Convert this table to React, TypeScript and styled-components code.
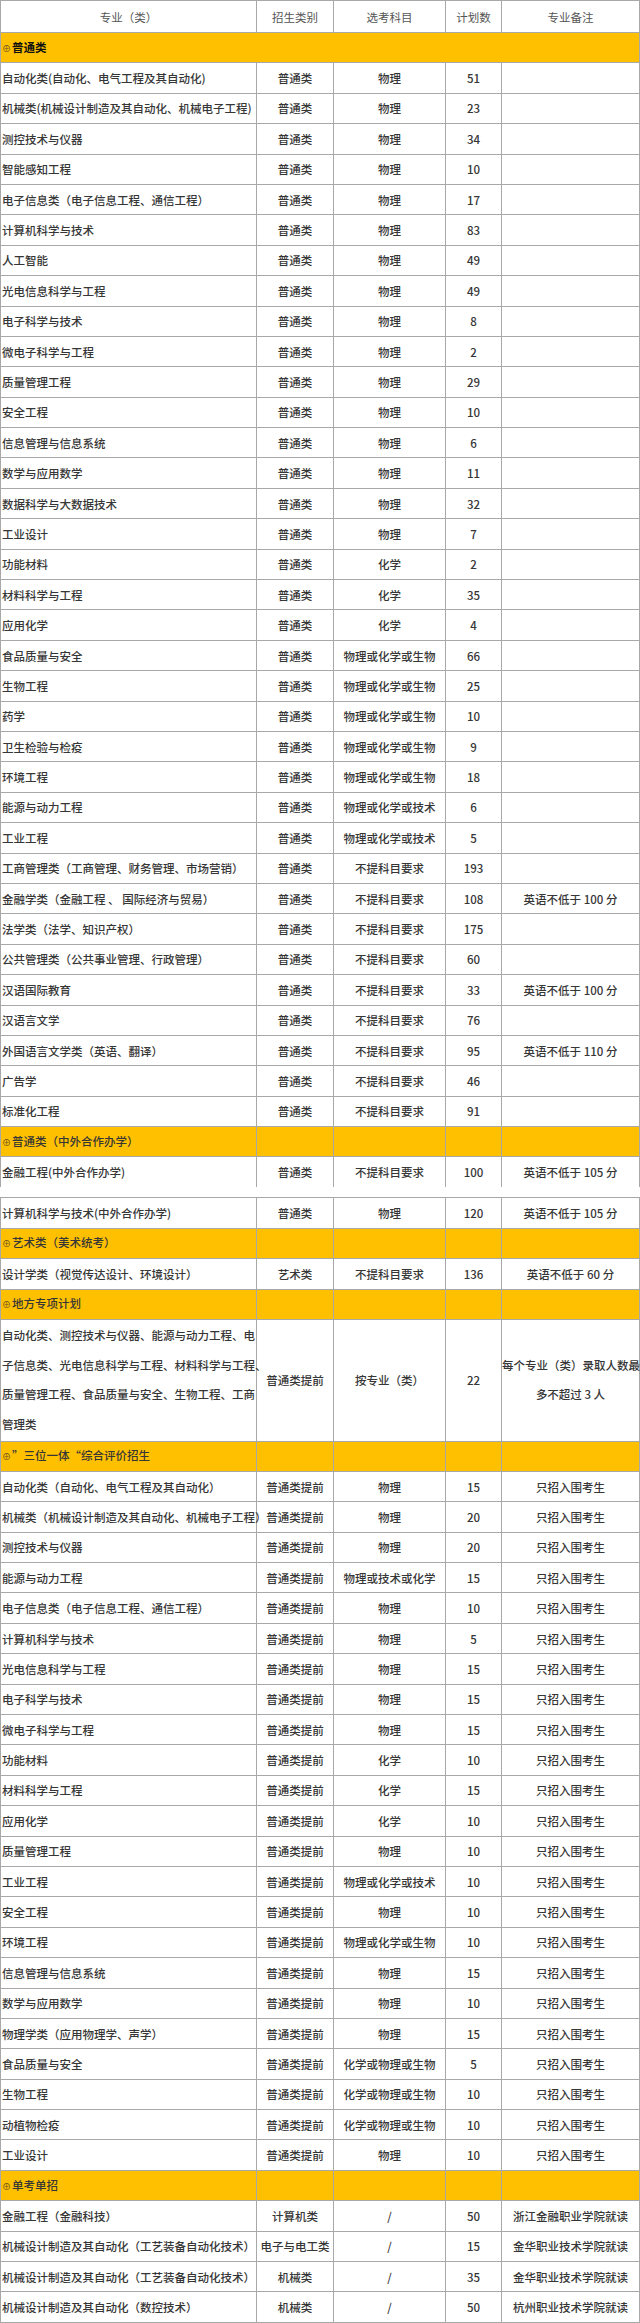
import React from 'react'
import styled, { createGlobalStyle } from 'styled-components'

const GlobalStyle = createGlobalStyle`
  html, body {
    margin: 0;
    padding: 0;
    background: #fff;
  }
  body {
    font-family: "Noto Sans CJK SC", "Noto Sans", sans-serif;
  }
`

const Page = styled.div`
  width: 640px;
  color: #363636;
  font-size: 11.5px;
  font-weight: 500;
`

const Table = styled.table<{ $openEnd?: boolean }>`
  width: 639px;
  border-collapse: collapse;
  table-layout: fixed;
  ${(p) => p.$openEnd && 'tr:last-child td { border-bottom: none; }'}
`

const Gap = styled.div`
  height: 10px;
`

const Row = styled.tr<{ $h?: number }>`
  height: ${(p) => p.$h ?? 30.4}px;
`

const Cell = styled.td<{ $left?: boolean; $tall?: boolean }>`
  border: 1px solid #a8a8a8;
  padding: 0 0 0 ${(p) => (p.$left ? 1 : 0)}px;
  text-align: ${(p) => (p.$left ? 'left' : 'center')};
  vertical-align: middle;
  white-space: nowrap;
  line-height: ${(p) => (p.$tall ? '29.5px' : '16px')};
`

const HeadCell = styled(Cell)`
  color: #555;
  font-weight: 400;
`

const SectionCell = styled(Cell)`
  background: #ffc000;
`

const Mark = styled.span`
  font-size: 9px;
  font-weight: 400;
  color: #6a5520;
  margin-right: 1px;
`

const SectionName = styled.span<{ $strong?: boolean }>`
  font-weight: ${(p) => (p.$strong ? 700 : 500)};
  color: ${(p) => (p.$strong ? '#111' : '#363636')};
`

type Item = [string, string, string, string, string?]

const general: Item[] = [
  ['自动化类(自动化、电气工程及其自动化)', '普通类', '物理', '51'],
  ['机械类(机械设计制造及其自动化、机械电子工程)', '普通类', '物理', '23'],
  ['测控技术与仪器', '普通类', '物理', '34'],
  ['智能感知工程', '普通类', '物理', '10'],
  ['电子信息类（电子信息工程、通信工程）', '普通类', '物理', '17'],
  ['计算机科学与技术', '普通类', '物理', '83'],
  ['人工智能', '普通类', '物理', '49'],
  ['光电信息科学与工程', '普通类', '物理', '49'],
  ['电子科学与技术', '普通类', '物理', '8'],
  ['微电子科学与工程', '普通类', '物理', '2'],
  ['质量管理工程', '普通类', '物理', '29'],
  ['安全工程', '普通类', '物理', '10'],
  ['信息管理与信息系统', '普通类', '物理', '6'],
  ['数学与应用数学', '普通类', '物理', '11'],
  ['数据科学与大数据技术', '普通类', '物理', '32'],
  ['工业设计', '普通类', '物理', '7'],
  ['功能材料', '普通类', '化学', '2'],
  ['材料科学与工程', '普通类', '化学', '35'],
  ['应用化学', '普通类', '化学', '4'],
  ['食品质量与安全', '普通类', '物理或化学或生物', '66'],
  ['生物工程', '普通类', '物理或化学或生物', '25'],
  ['药学', '普通类', '物理或化学或生物', '10'],
  ['卫生检验与检疫', '普通类', '物理或化学或生物', '9'],
  ['环境工程', '普通类', '物理或化学或生物', '18'],
  ['能源与动力工程', '普通类', '物理或化学或技术', '6'],
  ['工业工程', '普通类', '物理或化学或技术', '5'],
  ['工商管理类（工商管理、财务管理、市场营销）', '普通类', '不提科目要求', '193'],
  ['金融学类（金融工程 、 国际经济与贸易）', '普通类', '不提科目要求', '108', '英语不低于 100 分'],
  ['法学类（法学、知识产权）', '普通类', '不提科目要求', '175'],
  ['公共管理类（公共事业管理、行政管理）', '普通类', '不提科目要求', '60'],
  ['汉语国际教育', '普通类', '不提科目要求', '33', '英语不低于 100 分'],
  ['汉语言文学', '普通类', '不提科目要求', '76'],
  ['外国语言文学类（英语、翻译）', '普通类', '不提科目要求', '95', '英语不低于 110 分'],
  ['广告学', '普通类', '不提科目要求', '46'],
  ['标准化工程', '普通类', '不提科目要求', '91'],
]

const P = '普通类提前'
const N = '只招入围考生'
const trinity: Item[] = [
  ['自动化类（自动化、电气工程及其自动化）', P, '物理', '15', N],
  ['机械类（机械设计制造及其自动化、机械电子工程）', P, '物理', '20', N],
  ['测控技术与仪器', P, '物理', '20', N],
  ['能源与动力工程', P, '物理或技术或化学', '15', N],
  ['电子信息类（电子信息工程、通信工程）', P, '物理', '10', N],
  ['计算机科学与技术', P, '物理', '5', N],
  ['光电信息科学与工程', P, '物理', '15', N],
  ['电子科学与技术', P, '物理', '15', N],
  ['微电子科学与工程', P, '物理', '15', N],
  ['功能材料', P, '化学', '10', N],
  ['材料科学与工程', P, '化学', '15', N],
  ['应用化学', P, '化学', '10', N],
  ['质量管理工程', P, '物理', '10', N],
  ['工业工程', P, '物理或化学或技术', '10', N],
  ['安全工程', P, '物理', '10', N],
  ['环境工程', P, '物理或化学或生物', '10', N],
  ['信息管理与信息系统', P, '物理', '15', N],
  ['数学与应用数学', P, '物理', '10', N],
  ['物理学类（应用物理学、声学）', P, '物理', '15', N],
  ['食品质量与安全', P, '化学或物理或生物', '5', N],
  ['生物工程', P, '化学或物理或生物', '10', N],
  ['动植物检疫', P, '化学或物理或生物', '10', N],
  ['工业设计', P, '物理', '10', N],
]

const single: Item[] = [
  ['金融工程（金融科技）', '计算机类', '/', '50', '浙江金融职业学院就读'],
  ['机械设计制造及其自动化（工艺装备自动化技术）', '电子与电工类', '/', '15', '金华职业技术学院就读'],
  ['机械设计制造及其自动化（工艺装备自动化技术）', '机械类', '/', '35', '金华职业技术学院就读'],
  ['机械设计制造及其自动化（数控技术）', '机械类', '/', '50', '杭州职业技术学院就读'],
]

const Cols = () => (
  <colgroup>
    <col style={{ width: 256 }} />
    <col style={{ width: 77 }} />
    <col style={{ width: 112 }} />
    <col style={{ width: 56 }} />
    <col style={{ width: 138 }} />
  </colgroup>
)

const ItemRow = ({ item }: { item: Item }) => (
  <Row>
    <Cell $left>{item[0]}</Cell>
    <Cell>{item[1]}</Cell>
    <Cell>{item[2]}</Cell>
    <Cell>{item[3]}</Cell>
    <Cell>{item[4] ?? ''}</Cell>
  </Row>
)

const Section = ({ title, wide, strong }: { title: string; wide?: boolean; strong?: boolean }) => (
  <Row>
    <SectionCell $left colSpan={wide ? 5 : 1}>
      <Mark>⊕</Mark>
      <SectionName $strong={strong}>{title}</SectionName>
    </SectionCell>
    {!wide && (
      <>
        <SectionCell />
        <SectionCell />
        <SectionCell />
        <SectionCell />
      </>
    )}
  </Row>
)

const App = () => {
  return (
    <Page>
      <GlobalStyle />
      <Table $openEnd>
        <Cols />
        <tbody>
          <Row $h={32}>
            <HeadCell>专业（类）</HeadCell>
            <HeadCell>招生类别</HeadCell>
            <HeadCell>选考科目</HeadCell>
            <HeadCell>计划数</HeadCell>
            <HeadCell>专业备注</HeadCell>
          </Row>
          <Section title="普通类" wide strong />
          {general.map((item, i) => (
            <ItemRow key={i} item={item} />
          ))}
          <Section title="普通类（中外合作办学）" />
          <ItemRow item={['金融工程(中外合作办学)', '普通类', '不提科目要求', '100', '英语不低于 105 分']} />
        </tbody>
      </Table>
      <Gap />
      <Table>
        <Cols />
        <tbody>
          <ItemRow item={['计算机科学与技术(中外合作办学)', '普通类', '物理', '120', '英语不低于 105 分']} />
          <Section title="艺术类（美术统考）" />
          <ItemRow item={['设计学类（视觉传达设计、环境设计）', '艺术类', '不提科目要求', '136', '英语不低于 60 分']} />
          <Section title="地方专项计划" />
          <Row $h={121.6}>
            <Cell $left $tall>
              自动化类、测控技术与仪器、能源与动力工程、电
              <br />
              子信息类、光电信息科学与工程、材料科学与工程、
              <br />
              质量管理工程、食品质量与安全、生物工程、工商
              <br />
              管理类
            </Cell>
            <Cell>普通类提前</Cell>
            <Cell>按专业（类）</Cell>
            <Cell>22</Cell>
            <Cell $tall>
              每个专业（类）录取人数最
              <br />
              多不超过 3 人
            </Cell>
          </Row>
          <Section title="”三位一体“综合评价招生" />
          {trinity.map((item, i) => (
            <ItemRow key={i} item={item} />
          ))}
          <Section title="单考单招" />
          {single.map((item, i) => (
            <ItemRow key={i} item={item} />
          ))}
        </tbody>
      </Table>
    </Page>
  )
}

export default App
